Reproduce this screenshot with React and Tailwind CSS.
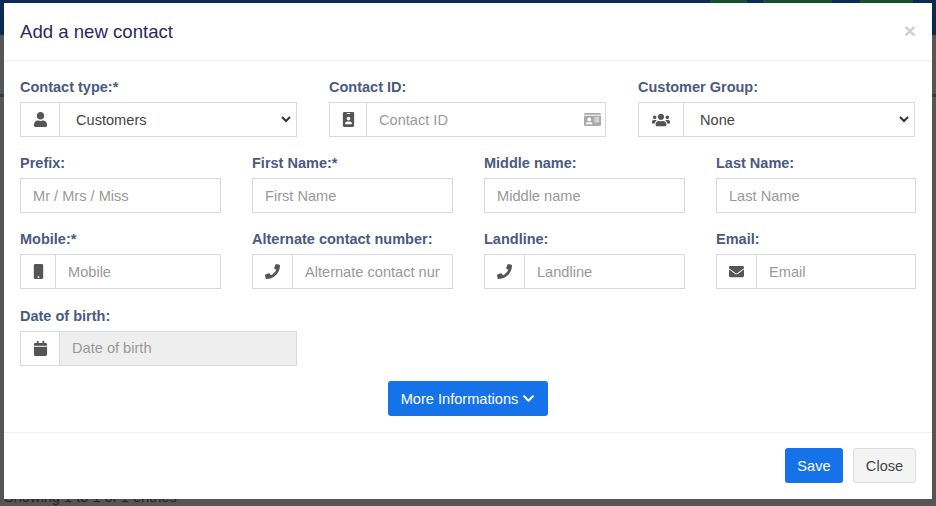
import React from "react";
import { FaUser, FaIdBadge, FaIdCard, FaUsers, FaMobile, FaPhone, FaCalendar, FaEnvelope, FaChevronDown } from "react-icons/fa";

const border = "border border-[#d6d9e2]";

function Label({ children }) {
  return <label className="block h-[25px] text-[14.5px] leading-[20px] font-bold text-[#4a5a80]">{children}</label>;
}

function Addon({ icon, w }) {
  return (
    <span className={`flex shrink-0 items-center justify-center border-r border-[#d6d9e2] text-[#555] text-[15px] ${w}`}>
      {icon}
    </span>
  );
}

function Field({ label, icon, w, placeholder, disabled, right }) {
  return (
    <div>
      <Label>{label}</Label>
      <div className={`flex h-[35px] ${border} bg-white`}>
        {icon && <Addon icon={icon} w={w} />}
        <input
          placeholder={placeholder}
          disabled={disabled}
          className={`min-w-0 flex-1 px-3 text-[14.6px] text-[#555] outline-none placeholder:text-[#999] ${disabled ? "bg-[#eeeeee] pt-[1px]" : "bg-white pt-[2px]"}`}
        />
        {right}
      </div>
    </div>
  );
}

function SelectField({ label, icon, w, value }) {
  return (
    <div>
      <Label>{label}</Label>
      <div className={`flex h-[35px] ${border} bg-white`}>
        <Addon icon={icon} w={w} />
        <div className="flex flex-1 items-center justify-between pl-4 pr-[5px] text-[14.6px] text-[#444]">
          <span className="pt-[2px]">{value}</span>
          <svg width="10" height="7" viewBox="0 0 10 7" fill="none" stroke="#333" strokeWidth="2"><path d="M1 1l4 4 4-4" /></svg>
        </div>
      </div>
    </div>
  );
}

export default function App() {
  return (
    <div className="relative h-[506px] w-[936px] overflow-hidden bg-[#555] font-['Liberation_Sans',Arial,sans-serif]">
      <div className="flex h-[35px] items-start justify-end bg-[#0b2a55]">
        <div className="h-[12px] w-[37px] bg-[#14502f]" />
        <div className="ml-[16px] h-[12px] w-[69px] bg-[#14502f]" />
        <div className="ml-[28px] mr-[23px] h-[12px] w-[53px] bg-[#14502f]" />
      </div>
      <div className="mt-[59px] h-[3px] bg-[#1f3f5c]" />
      <div className="absolute bottom-[-3px] left-[4px] text-[14.6px] text-[#222]">Showing 1 to 1 of 1 entries</div>
      <div className="absolute left-[4px] top-[3px] flex h-[496px] w-[928px] flex-col bg-white">
        <div className="flex h-[58px] shrink-0 items-center justify-between border-b border-[#f0f0f0] px-4 pt-[1px]">
          <h4 className="text-[18.6px] text-[#2a2a5c]">Add a new contact</h4>
          <span className="mb-[3px] text-[21px] font-bold leading-none text-[#cfcfcf]">×</span>
        </div>
        <div className="flex flex-1 flex-col px-4 pt-[16px]">
          <div className="grid grid-cols-[277px_277px_277px] gap-x-[32px]">
            <SelectField label="Contact type:*" icon={<FaUser />} w="w-[39px]" value="Customers" />
            <Field label="Contact ID:" icon={<FaIdBadge />} w="w-[37px]" placeholder="Contact ID" right={<span className="flex items-center pr-[4px] text-[17px] text-[#aaa]"><FaIdCard /></span>} />
            <SelectField label="Customer Group:" icon={<FaUsers className="text-[18px]" />} w="w-[45px]" value="None" />
          </div>
          <div className="mt-[16.2px] grid grid-cols-[201px_201px_201px_200px] gap-x-[31px]">
            <Field label="Prefix:" placeholder="Mr / Mrs / Miss" />
            <Field label="First Name:*" placeholder="First Name" />
            <Field label="Middle name:" placeholder="Middle name" />
            <Field label="Last Name:" placeholder="Last Name" />
          </div>
          <div className="mt-[16.2px] grid grid-cols-[201px_201px_201px_200px] gap-x-[31px]">
            <Field label="Mobile:*" icon={<FaMobile />} w="w-[35px]" placeholder="Mobile" />
            <Field label="Alternate contact number:" icon={<FaPhone />} w="w-[40px]" placeholder="Alternate contact number" />
            <Field label="Landline:" icon={<FaPhone />} w="w-[40px]" placeholder="Landline" />
            <Field label="Email:" icon={<FaEnvelope />} w="w-[40px]" placeholder="Email" />
          </div>
          <div className="mt-[16.2px] grid grid-cols-[277px_277px_277px] gap-x-[32px]">
            <Field label="Date of birth:" icon={<FaCalendar />} w="w-[39px]" placeholder="Date of birth" disabled />
          </div>
          <div className="mt-[15px] flex justify-center">
            <button className="flex h-[35px] w-[160px] items-center justify-center gap-1 rounded-[3px] bg-[#1572e8] pt-[3px] text-[14.6px] text-white">
              More Informations <FaChevronDown className="mb-[2px] text-[13px]" />
            </button>
          </div>
        </div>
        <div className="flex h-[67px] shrink-0 items-start justify-end gap-[10px] border-t border-[#f0f0f0] px-4 pt-[15px]">
          <button className="h-[35px] w-[58px] rounded-[3px] bg-[#1572e8] pt-[2px] text-[14.6px] text-white">Save</button>
          <button className="h-[35px] w-[63px] rounded-[3px] border border-[#ddd] bg-[#f4f4f4] pt-[2px] text-[14.6px] text-[#444]">Close</button>
        </div>
      </div>
    </div>
  );
}
